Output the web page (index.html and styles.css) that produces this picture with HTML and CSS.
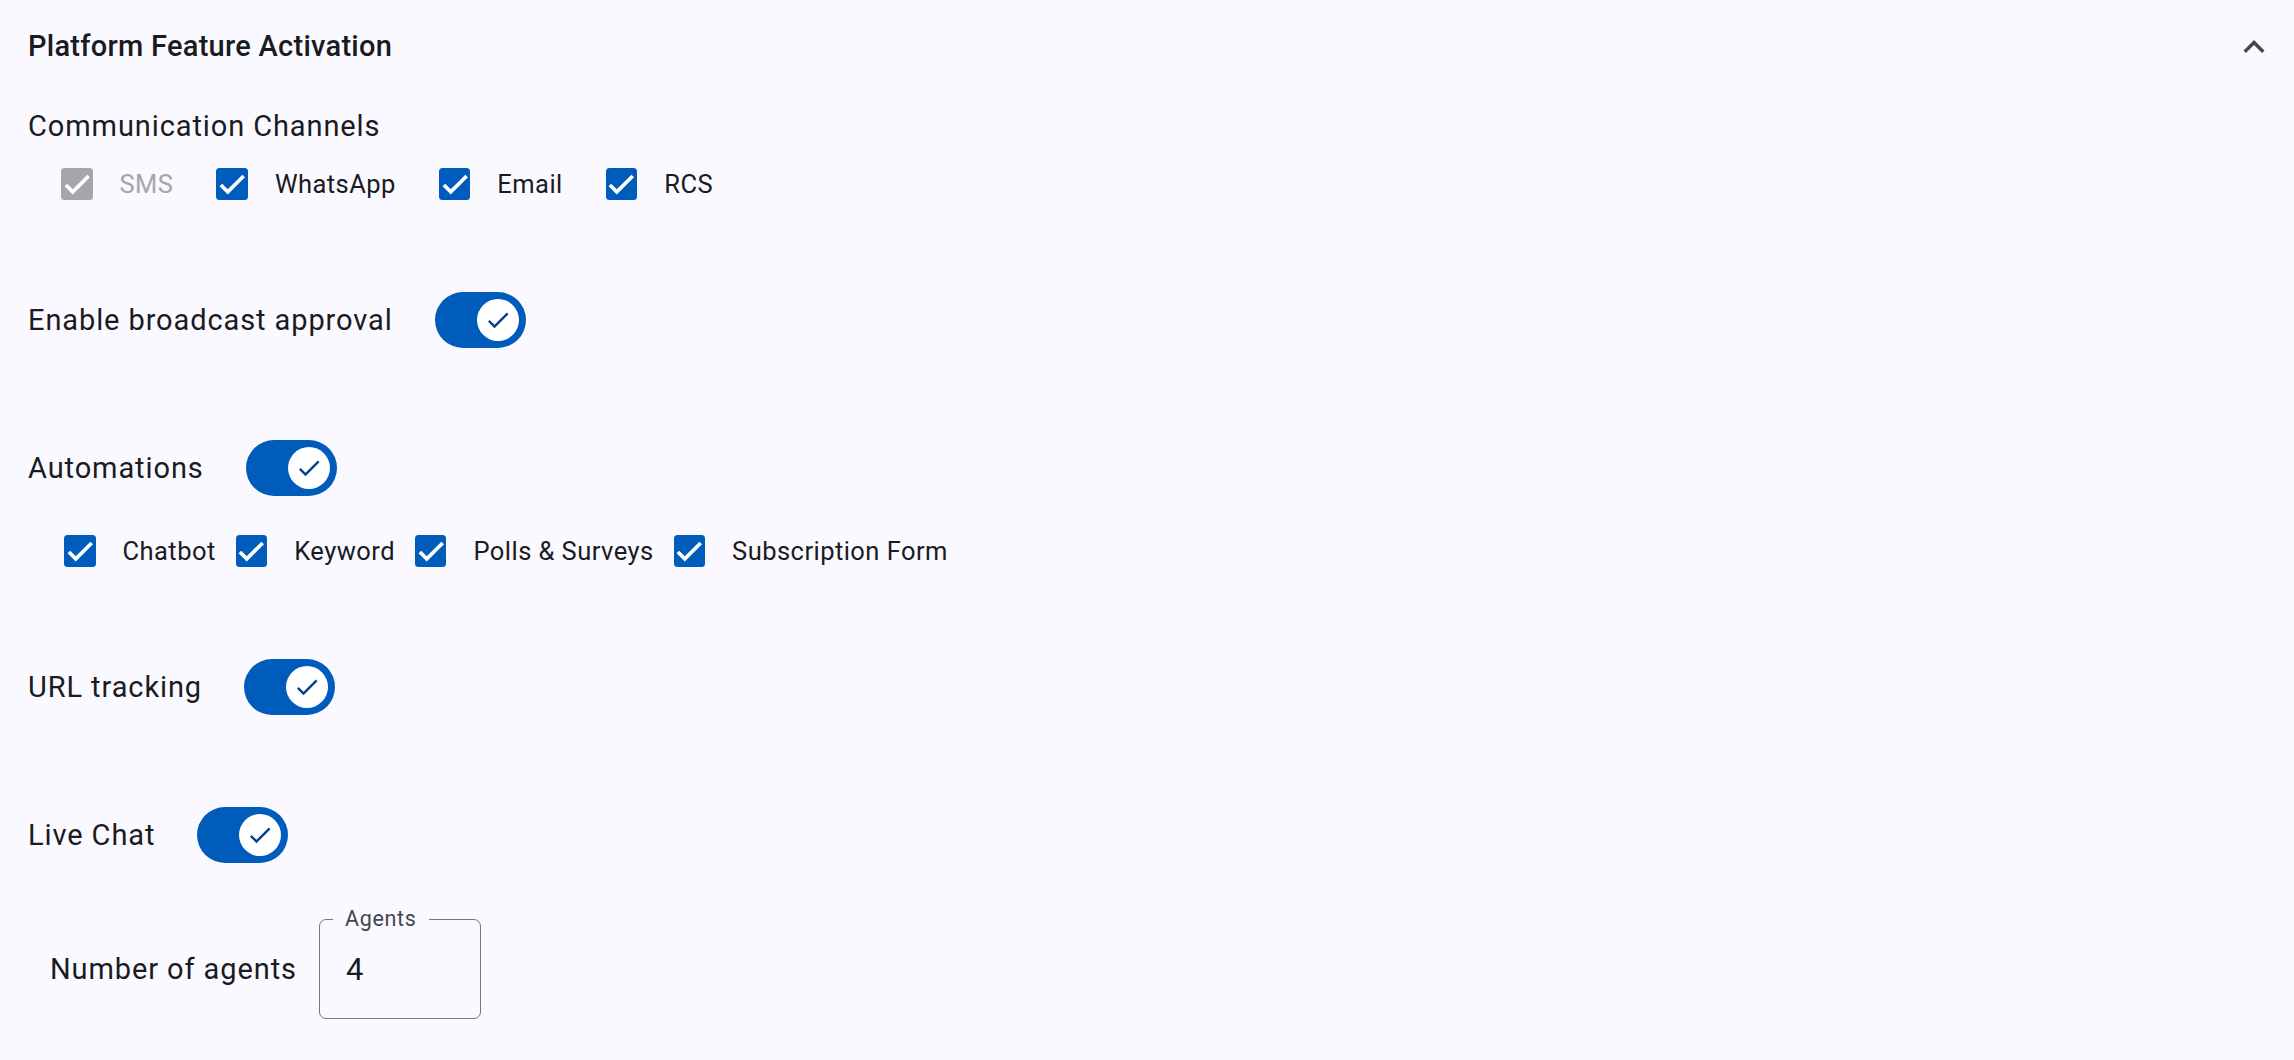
FILE: index.html
```html
<!DOCTYPE html>
<html lang="en">
<head>
    <meta charset="UTF-8">
    <meta name="viewport" content="width=device-width, initial-scale=1.0">
    <title>Platform Feature Activation</title>
    <link rel="stylesheet" href="styles.css">
</head>
<body>
    <div class="panel">
        <div class="panel-header">
            <h2 class="panel-title">Platform Feature Activation</h2>
            <svg class="expand-icon" viewBox="0 0 24 24"><path d="M12 8l-6 6 1.41 1.41L12 10.83l4.59 4.58L18 14z"/></svg>
        </div>

        <div class="panel-body">
            <div class="group-title">Communication Channels</div>
            <div class="check-row channels">
                <label class="check disabled">
                    <input type="checkbox" checked disabled>
                    <span class="box"><svg viewBox="0 0 24 24"><path d="M1.73 12.91 8.1 19.28 22.79 4.59"/></svg></span>
                    <span class="check-text">SMS</span>
                </label>
                <label class="check">
                    <input type="checkbox" checked>
                    <span class="box"><svg viewBox="0 0 24 24"><path d="M1.73 12.91 8.1 19.28 22.79 4.59"/></svg></span>
                    <span class="check-text">WhatsApp</span>
                </label>
                <label class="check">
                    <input type="checkbox" checked>
                    <span class="box"><svg viewBox="0 0 24 24"><path d="M1.73 12.91 8.1 19.28 22.79 4.59"/></svg></span>
                    <span class="check-text">Email</span>
                </label>
                <label class="check">
                    <input type="checkbox" checked>
                    <span class="box"><svg viewBox="0 0 24 24"><path d="M1.73 12.91 8.1 19.28 22.79 4.59"/></svg></span>
                    <span class="check-text">RCS</span>
                </label>
            </div>

            <section class="feature solo">
                <div class="toggle-row">
                    <span class="toggle-label">Enable broadcast approval</span>
                    <label class="switch">
                        <input type="checkbox" checked>
                        <span class="track"><span class="thumb"><svg viewBox="0 0 24 24"><path d="M9 16.17 4.83 12l-1.42 1.41L9 19 21 7l-1.41-1.41z"/></svg></span></span>
                    </label>
                </div>
            </section>

            <section class="feature">
                <div class="toggle-row">
                    <span class="toggle-label">Automations</span>
                    <label class="switch">
                        <input type="checkbox" checked>
                        <span class="track"><span class="thumb"><svg viewBox="0 0 24 24"><path d="M9 16.17 4.83 12l-1.42 1.41L9 19 21 7l-1.41-1.41z"/></svg></span></span>
                    </label>
                </div>
                <div class="check-row automations">
                    <label class="check">
                        <input type="checkbox" checked>
                        <span class="box"><svg viewBox="0 0 24 24"><path d="M1.73 12.91 8.1 19.28 22.79 4.59"/></svg></span>
                        <span class="check-text">Chatbot</span>
                    </label>
                    <label class="check">
                        <input type="checkbox" checked>
                        <span class="box"><svg viewBox="0 0 24 24"><path d="M1.73 12.91 8.1 19.28 22.79 4.59"/></svg></span>
                        <span class="check-text">Keyword</span>
                    </label>
                    <label class="check">
                        <input type="checkbox" checked>
                        <span class="box"><svg viewBox="0 0 24 24"><path d="M1.73 12.91 8.1 19.28 22.79 4.59"/></svg></span>
                        <span class="check-text">Polls &amp; Surveys</span>
                    </label>
                    <label class="check">
                        <input type="checkbox" checked>
                        <span class="box"><svg viewBox="0 0 24 24"><path d="M1.73 12.91 8.1 19.28 22.79 4.59"/></svg></span>
                        <span class="check-text">Subscription Form</span>
                    </label>
                </div>
            </section>

            <section class="feature solo">
                <div class="toggle-row">
                    <span class="toggle-label">URL tracking</span>
                    <label class="switch">
                        <input type="checkbox" checked>
                        <span class="track"><span class="thumb"><svg viewBox="0 0 24 24"><path d="M9 16.17 4.83 12l-1.42 1.41L9 19 21 7l-1.41-1.41z"/></svg></span></span>
                    </label>
                </div>
            </section>

            <section class="feature">
                <div class="toggle-row">
                    <span class="toggle-label">Live Chat</span>
                    <label class="switch">
                        <input type="checkbox" checked>
                        <span class="track"><span class="thumb"><svg viewBox="0 0 24 24"><path d="M9 16.17 4.83 12l-1.42 1.41L9 19 21 7l-1.41-1.41z"/></svg></span></span>
                    </label>
                </div>
                <div class="agents-row">
                    <span class="toggle-label">Number of agents</span>
                    <div class="field">
                        <span class="field-label">Agents</span>
                        <input class="field-input" type="text" value="4">
                    </div>
                </div>
            </section>
        </div>
    </div>
</body>
</html>
```

FILE: styles.css
```css
body {
    margin: 0;
    font-family: Roboto, "Noto Sans", sans-serif;
    background-color: #f9f9ff;
    color: #1a1b1f;
}

.panel {
    padding: 0 19px 0 28px;
}

.panel-header {
    height: 91px;
    display: flex;
    align-items: center;
    justify-content: space-between;
}

.panel-title {
    margin: 0;
    font-size: 29px;
    font-weight: 500;
    line-height: 42px;
    letter-spacing: 0.27px;
}

.expand-icon {
    width: 42px;
    height: 42px;
    margin-top: 2px;
    fill: #44474e;
}

.group-title,
.toggle-label {
    font-size: 29px;
    line-height: 42px;
    letter-spacing: 0.9px;
}

.group-title {
    margin-top: 14px;
}

/* checkbox rows */

.check-row {
    height: 70px;
    display: flex;
    align-items: center;
}

.check-row.channels {
    margin-top: 2px;
    padding-left: 33px;
    gap: 43px;
}

.check-row.automations {
    margin-top: 13px;
    padding-left: 36px;
    gap: 20px;
}

.check {
    display: flex;
    align-items: center;
    cursor: pointer;
}

.check input,
.switch input {
    display: none;
}

.box {
    width: 31.5px;
    height: 31.5px;
    border-radius: 3.5px;
    background: #005cbb;
    display: flex;
    align-items: center;
    justify-content: center;
}

.box svg {
    width: 26px;
    height: 26px;
    fill: none;
    stroke: #fff;
    stroke-width: 3.4;
}

.check-text {
    margin-left: 27px;
    font-size: 25.5px;
    line-height: 40px;
    letter-spacing: 0.45px;
}

.check.disabled .box {
    background: #a5a6aa;
}

.check.disabled .check-text {
    color: #a5a6aa;
}

/* toggle sections */

.feature {
    margin-top: 66px;
}

.feature.solo {
    padding-bottom: 12px;
}

.toggle-row {
    height: 70px;
    display: flex;
    align-items: center;
    gap: 42px;
}

.switch {
    display: flex;
    cursor: pointer;
}

.track {
    width: 91px;
    height: 56px;
    box-sizing: border-box;
    padding: 0 7px;
    border-radius: 28px;
    background: #005cbb;
    display: flex;
    align-items: center;
    justify-content: flex-end;
}

.thumb {
    width: 42px;
    height: 42px;
    border-radius: 50%;
    background: #fff;
    display: flex;
    align-items: center;
    justify-content: center;
}

.thumb svg {
    width: 28px;
    height: 28px;
    fill: #00458f;
}

/* agents field */

.agents-row {
    margin-top: 49px;
    padding-left: 22px;
    display: flex;
    align-items: center;
    gap: 22px;
}

.field {
    position: relative;
    width: 162px;
    height: 100px;
    box-sizing: border-box;
    border: 1.5px solid #74777f;
    border-radius: 7px;
    display: flex;
    align-items: center;
}

.field-label {
    position: absolute;
    top: -13px;
    left: 13px;
    padding: 0 12px;
    background: #f9f9ff;
    font-size: 21.5px;
    line-height: 24px;
    letter-spacing: 0.7px;
    color: #44474e;
}

.field-input {
    width: 100%;
    border: none;
    outline: none;
    background: transparent;
    padding: 0 0 0 26px;
    font-family: inherit;
    font-size: 31px;
    letter-spacing: 0.9px;
    color: #1a1b1f;
}
```
